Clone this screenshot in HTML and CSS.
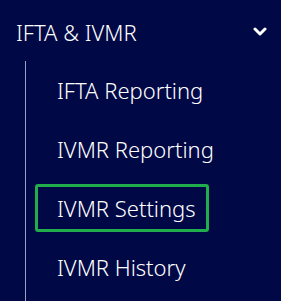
FILE: index.html
```html
<!DOCTYPE html>
<html lang="en">
<head>
    <meta charset="UTF-8">
    <meta name="viewport" content="width=device-width, initial-scale=1.0">
    <title>IFTA &amp; IVMR</title>
    <link rel="stylesheet" href="styles.css">
</head>
<body>
    <nav class="side-nav">
        <div class="nav-group-header">
            <span>IFTA &amp; IVMR</span>
            <svg class="chevron" width="14" height="9" viewBox="0 0 14 9">
                <polyline points="2,2 7,7 12,2" fill="none" stroke="#ffffff" stroke-width="3" stroke-linecap="round" stroke-linejoin="round"/>
            </svg>
        </div>
        <ul class="sub-menu">
            <li><a href="#" class="sub-link">IFTA Reporting</a></li>
            <li><a href="#" class="sub-link">IVMR Reporting</a></li>
            <li><a href="#" class="sub-link focused">IVMR Settings</a></li>
            <li><a href="#" class="sub-link">IVMR History</a></li>
        </ul>
    </nav>
</body>
</html>
```

FILE: styles.css
```css
html, body {
    margin: 0;
    padding: 0;
    height: 100%;
    background-color: #010846;
}

body {
    font-family: "Noto Sans", "Open Sans", sans-serif;
    color: #ffffff;
    overflow: hidden;
}

.side-nav {
    width: 281px;
}

.nav-group-header {
    display: flex;
    justify-content: space-between;
    align-items: center;
    height: 61px;
    box-sizing: border-box;
    padding: 2px 14px 0 16px;
    font-size: 22px;
    font-weight: 350;
}

.chevron {
    display: block;
}

.sub-menu {
    list-style: none;
    margin: 0 0 0 25px;
    padding: 5px 0 20px 0;
    border-left: 1px solid #9ca1c2;
    display: flex;
    flex-direction: column;
    gap: 11px;
}

.sub-link {
    display: flex;
    align-items: center;
    width: 174px;
    height: 48px;
    box-sizing: border-box;
    margin-left: 9px;
    padding-left: 19px;
    border: 3px solid transparent;
    border-radius: 3px;
    color: #ffffff;
    text-decoration: none;
    white-space: nowrap;
    font-size: 22px;
    font-weight: 350;
}

.sub-link.focused {
    border-color: #21ad4b;
}
```
